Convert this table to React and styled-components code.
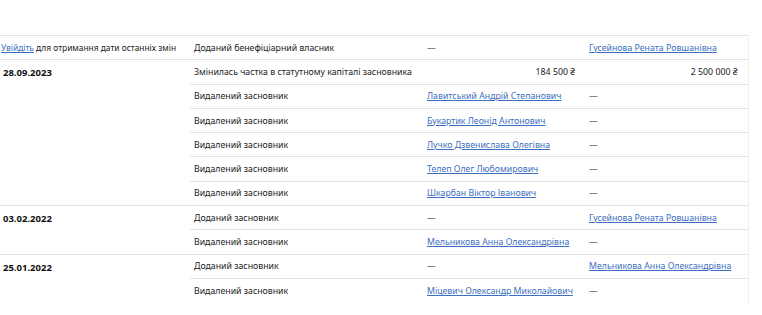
import React from "react";
import styled, { createGlobalStyle } from "styled-components";

const GlobalStyle = createGlobalStyle`
    body {
        margin: 0;
        background: #ffffff;
        font-family: "Noto Sans", "Open Sans", sans-serif;
        color: #222222;
    }
`;

const rows = [
    {
        date: null,
        items: [{ type: "Доданий бенефіціарний власник", from: "—", to: { link: "Гусейнова Рената Ровшанівна" } }],
    },
    {
        date: "28.09.2023",
        items: [
            { type: "Змінилась частка в статутному капіталі засновника", from: { amount: "184 500 ₴" }, to: { amount: "2 500 000 ₴" } },
            { type: "Видалений засновник", from: { link: "Лавитський Андрій Степанович" }, to: "—" },
            { type: "Видалений засновник", from: { link: "Букартик Леонід Антонович" }, to: "—" },
            { type: "Видалений засновник", from: { link: "Лучко Дзвенислава Олегівна" }, to: "—" },
            { type: "Видалений засновник", from: { link: "Телеп Олег Любомирович" }, to: "—" },
            { type: "Видалений засновник", from: { link: "Шкарбан Віктор Іванович" }, to: "—" },
        ],
    },
    {
        date: "03.02.2022",
        items: [
            { type: "Доданий засновник", from: "—", to: { link: "Гусейнова Рената Ровшанівна" } },
            { type: "Видалений засновник", from: { link: "Мельникова Анна Олександрівна" }, to: "—" },
        ],
    },
    {
        date: "25.01.2022",
        items: [
            { type: "Доданий засновник", from: "—", to: { link: "Мельникова Анна Олександрівна" } },
            { type: "Видалений засновник", from: { link: "Міцевич Олександр Миколайович" }, to: "—" },
        ],
    },
];

function Value({ value }) {
    if (typeof value === "string") return <Dash>{value}</Dash>;
    if (value.link) return <Link href="#">{value.link}</Link>;
    return <Amount>{value.amount}</Amount>;
}

export default function App() {
    return (
        <Page>
            <GlobalStyle />
            <Table>
                <colgroup>
                    <col style={{ width: 190 }} />
                    <col style={{ width: 233 }} />
                    <col style={{ width: 162 }} />
                    <col style={{ width: 163 }} />
                </colgroup>
                <tbody>
                    {rows.map((group, gi) =>
                        group.items.map((item, ii) => (
                            <Row key={`${gi}-${ii}`}>
                                {ii === 0 && (
                                    <DateCell rowSpan={group.items.length}>
                                        {group.date ? (
                                            <DateText>{group.date}</DateText>
                                        ) : (
                                            <LoginHint>
                                                <Link href="#">Увійдіть</Link> для отримання дати останніх змін
                                            </LoginHint>
                                        )}
                                    </DateCell>
                                )}
                                <Cell>{item.type}</Cell>
                                <Cell $right={!!(item.from && item.from.amount)}>
                                    <Value value={item.from} />
                                </Cell>
                                <Cell $right={!!(item.to && item.to.amount)}>
                                    <Value value={item.to} />
                                </Cell>
                            </Row>
                        ))
                    )}
                </tbody>
            </Table>
        </Page>
    );
}

const Page = styled.div`
    padding-top: 35px;
    height: 315px;
    box-sizing: border-box;
    overflow: hidden;
`;

const Table = styled.table`
    width: 748px;
    table-layout: fixed;
    border-collapse: collapse;
    font-size: 8.75px;
    border-right: 1px solid #f0f0f0;
`;

const Row = styled.tr`
    height: 24.3px;
    td {
        border-top: 1px solid #e2e4e6;
    }
`;

const Cell = styled.td`
    padding: 0 10px 0 4px;
    vertical-align: middle;
    white-space: nowrap;
    overflow: hidden;
    text-align: ${(p) => (p.$right ? "right" : "left")};
`;

const DateCell = styled.td`
    padding: 6px 0 0 3px;
    vertical-align: top;
    white-space: nowrap;
`;

const DateText = styled.span`
    font-weight: 700;
    font-size: 9.5px;
    color: #111111;
`;

const LoginHint = styled.span`
    display: inline-block;
    margin-left: -2px;
    font-size: 8.4px;
    color: #222222;
`;

const Link = styled.a`
    color: #3b6fc0;
    text-decoration: underline;
`;

const Dash = styled.span`
    color: #222222;
`;

const Amount = styled.span`
    color: #222222;
`;
